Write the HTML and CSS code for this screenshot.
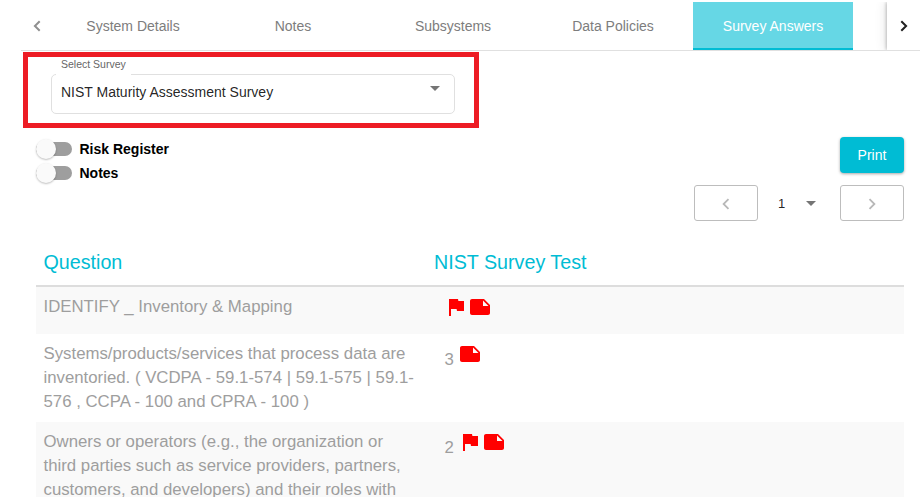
FILE: index.html
```
<!DOCTYPE html>
<html lang="en">
<head>
    <meta charset="UTF-8">
    <meta name="viewport" content="width=device-width, initial-scale=1.0">
    <title>Survey Answers</title>
    <link rel="stylesheet" href="styles.css">
</head>
<body>
    <!-- shared icons -->
    <svg class="icon-defs" width="0" height="0">
        <symbol id="flag" viewBox="0 0 24 24"><path d="M14.4 6L14 4H5v17h2v-7h5.6l.4 2h7V6z"/></symbol>
        <symbol id="note" viewBox="0 0 24 24"><path d="M22 10l-6-6H4c-1.1 0-2 .9-2 2v12c0 1.1.9 2 2 2h16c1.1 0 2-.9 2-2v-8zm-7-4.500l5.500 5.500H15V5.500z"/></symbol>
        <symbol id="left" viewBox="0 0 24 24"><path d="M15.410 7.410L14 6l-6 6 6 6 1.410-1.410L10.830 12z"/></symbol>
        <symbol id="right" viewBox="0 0 24 24"><path d="M10 6L8.590 7.410 13.170 12l-4.580 4.590L10 18l6-6z"/></symbol>
    </svg>

    <div class="tab-header">
        <div class="tab-scroll prev">
            <svg viewBox="0 0 8 12"><path d="M6.700 1.200L1.900 6l4.800 4.800"/></svg>
        </div>
        <div class="tabs">
            <div class="tab">System Details</div>
            <div class="tab">Notes</div>
            <div class="tab">Subsystems</div>
            <div class="tab">Data Policies</div>
            <div class="tab active">Survey Answers</div>
        </div>
        <div class="tab-scroll next">
            <svg viewBox="0 0 8 12"><path d="M1.300 1.200L6.100 6l-4.800 4.800"/></svg>
        </div>
    </div>

    <div class="survey-highlight">
        <div class="survey-select">
            <span class="select-label">Select Survey</span>
            <span class="select-value">NIST Maturity Assessment Survey</span>
            <span class="arrow"></span>
        </div>
    </div>

    <div class="toolbar">
        <div class="toggles">
            <div class="toggle"><span class="toggle-bar"><span class="toggle-thumb"></span></span>Risk Register</div>
            <div class="toggle"><span class="toggle-bar"><span class="toggle-thumb"></span></span>Notes</div>
        </div>
        <div class="actions">
            <button class="print-btn">Print</button>
            <div class="pager">
                <button class="page-btn" disabled><svg><use href="#left"/></svg></button>
                <div class="page-select"><span>1</span><span class="arrow"></span></div>
                <button class="page-btn" disabled><svg><use href="#right"/></svg></button>
            </div>
        </div>
    </div>

    <div class="answers">
        <div class="row head">
            <div>Question</div>
            <div>NIST Survey Test</div>
        </div>
        <div class="row section">
            <div>IDENTIFY _ Inventory &amp; Mapping</div>
            <div class="answer">
                <svg class="icon"><use href="#flag"/></svg>
                <svg class="icon"><use href="#note"/></svg>
            </div>
        </div>
        <div class="row">
            <div>Systems/products/services that process data are inventoried. ( VCDPA - 59.1-574 | 59.1-575 | 59.1-576 , CCPA - 100 and CPRA - 100 )</div>
            <div class="answer">
                <span class="score">3</span>
                <svg class="icon"><use href="#note"/></svg>
            </div>
        </div>
        <div class="row">
            <div>Owners or operators (e.g., the organization or third parties such as service providers, partners, customers, and developers) and their roles with</div>
            <div class="answer">
                <span class="score">2</span>
                <svg class="icon"><use href="#flag"/></svg>
                <svg class="icon"><use href="#note"/></svg>
            </div>
        </div>
    </div>
</body>
</html>
```
FILE: styles.css
```
* {
    box-sizing: border-box;
}
body {
    margin: 0;
    height: 497px;
    overflow: hidden;
    background-color: #fff;
    font-family: "Liberation Sans", Arial, sans-serif;
    font-size: 14px;
    color: rgba(0, 0, 0, 0.87);
}
button {
    font-family: inherit;
    padding: 0;
}
.icon-defs {
    position: absolute;
}

/* tabs */
.tab-header {
    display: flex;
    height: 51px;
    margin-left: 21px;
    padding-top: 2px;
    border-bottom: 1px solid #e0e0e0;
}
.tab-scroll {
    display: flex;
    align-items: center;
    justify-content: center;
    width: 32px;
}
.tab-scroll svg {
    width: 8px;
    height: 12px;
    fill: none;
    stroke: #212121;
    stroke-width: 2;
}
.tab-scroll.prev svg {
    stroke: #909090;
}
.tab-scroll.next {
    width: 33px;
    box-shadow: -1px 0 3px rgba(0, 0, 0, 0.22), -3px 0 10px rgba(0, 0, 0, 0.08);
    clip-path: inset(0 0 0 -16px);
}
.tabs {
    display: flex;
    flex: 1;
}
.tab {
    display: flex;
    align-items: center;
    justify-content: center;
    width: 160px;
    color: #7d7d7d;
}
.tab.active {
    background-color: #66d7e5;
    color: #fff;
    box-shadow: inset 0 -2px #00bcd4;
}

/* survey select */
.survey-highlight {
    width: 456px;
    height: 76px;
    margin: 1px 0 0 23px;
    padding: 17px 19px 0 23px;
    border: 5px solid #ed1c24;
}
.survey-select {
    position: relative;
    display: flex;
    justify-content: space-between;
    height: 40px;
    padding: 9px 14px 0 9px;
    border: 1px solid #e0e0e0;
    border-radius: 5px;
}
.select-label {
    position: absolute;
    top: -17px;
    left: 4px;
    width: 75px;
    height: 18px;
    padding-left: 5px;
    background-color: #fff;
    font-size: 10.5px;
    line-height: 13px;
    white-space: nowrap;
    color: #666;
}
.arrow {
    width: 0;
    height: 0;
    border: 5px solid transparent;
    border-top-color: #757575;
    border-bottom: none;
}
.survey-select .arrow {
    margin-top: 2px;
}

/* toggles, print and paging */
.toolbar {
    display: flex;
    justify-content: space-between;
    margin: 9px 16px 0 36px;
}
.toggle {
    display: flex;
    align-items: center;
    height: 24px;
    font-weight: bold;
    color: #000;
}
.toggle-bar {
    position: relative;
    width: 36px;
    height: 14px;
    margin-right: 7.5px;
    border-radius: 8px;
    background-color: #9e9e9e;
}
.toggle-thumb {
    position: absolute;
    top: -3px;
    left: 0;
    width: 20px;
    height: 20px;
    border-radius: 50%;
    background-color: #fafafa;
    box-shadow: 0 1px 2px rgba(0, 0, 0, 0.25);
}
.actions {
    display: flex;
    flex-direction: column;
    align-items: flex-end;
    gap: 12px;
}
.print-btn {
    width: 64px;
    height: 36px;
    border: none;
    border-radius: 4px;
    background-color: #00bcd4;
    color: #fff;
    font-size: 14px;
    box-shadow: 0 1px 3px rgba(0, 0, 0, 0.35);
}
.pager {
    display: flex;
}
.page-btn {
    display: flex;
    align-items: center;
    justify-content: center;
    width: 64px;
    height: 36px;
    border: 1px solid #bdbdbd;
    border-radius: 3px;
    background-color: #fff;
}
.page-btn svg {
    width: 22px;
    height: 22px;
    margin-top: 2px;
    fill: #b8b8b8;
}
.page-select {
    display: flex;
    align-items: center;
    justify-content: space-between;
    width: 82px;
    padding: 0 24px 0 20px;
    font-size: 13px;
}

/* answers table */
.answers {
    margin: 16px 16px 0 36px;
    font-size: 16.8px;
    line-height: 24px;
    color: #9e9e9e;
}
.row {
    display: grid;
    grid-template-columns: 391px 1fr;
    padding: 8px 0;
}
.row > div {
    padding: 0 7px;
}
.row > div:first-child {
    padding-left: 7.5px;
}
.row:nth-child(even) {
    background-color: #f9f9f9;
}
.row.head {
    height: 50px;
    padding-top: 13px;
    border-bottom: 2px solid #ddd;
    font-size: 19.7px;
    color: #00bcd4;
}
.row.section {
    height: 47px;
}
.row > .answer {
    display: flex;
    padding-left: 17.4px;
}
.score {
    width: 14px;
    padding-top: 6px;
}
.icon {
    width: 24px;
    height: 24px;
    fill: #f00;
}
```
